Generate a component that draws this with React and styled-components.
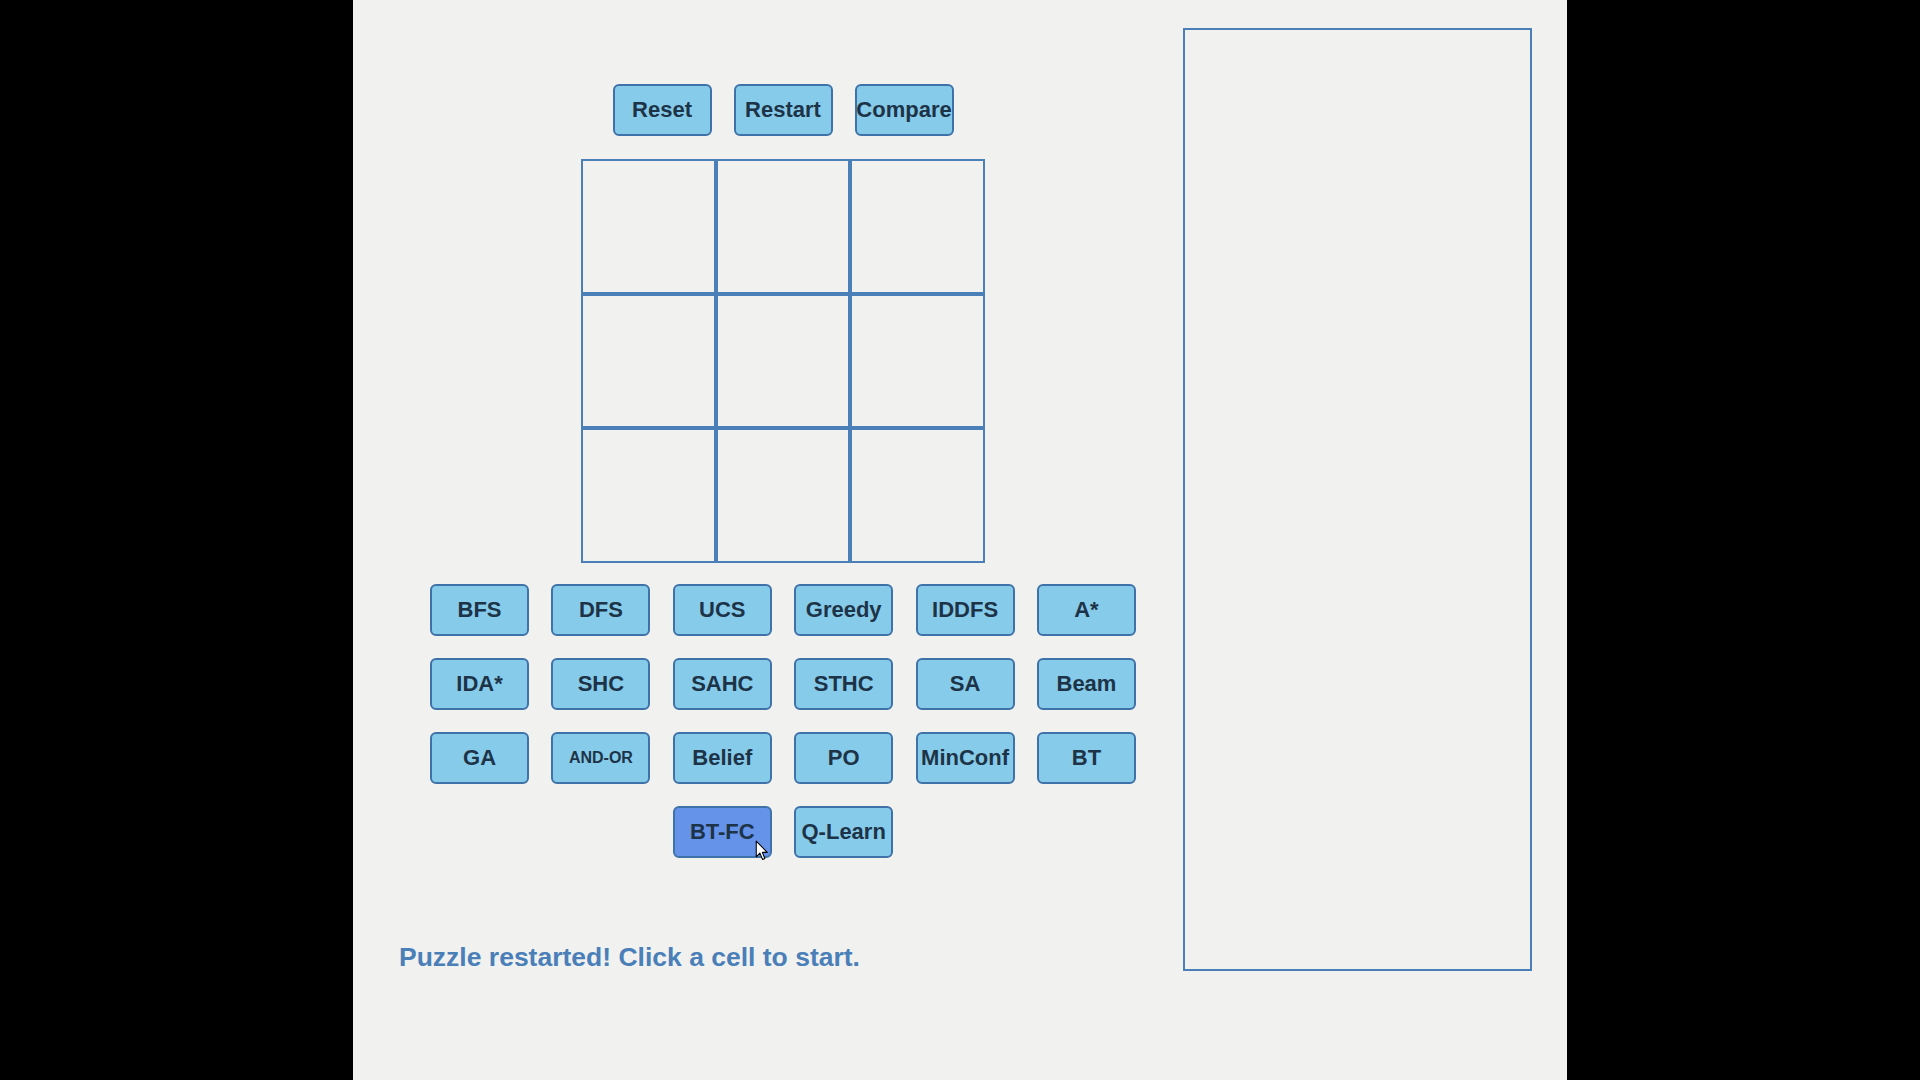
import React from "react";
import styled, { createGlobalStyle } from "styled-components";

const Global = createGlobalStyle`
  html, body {
    margin: 0;
    padding: 0;
    background: #000;
  }
  body {
    font-family: "Liberation Sans", Arial, sans-serif;
  }
`;

const topButtons = ["Reset", "Restart", "Compare"];

const algorithms = [
  "BFS", "DFS", "UCS", "Greedy", "IDDFS", "A*",
  "IDA*", "SHC", "SAHC", "STHC", "SA", "Beam",
  "GA", "AND-OR", "Belief", "PO", "MinConf", "BT",
  "BT-FC", "Q-Learn",
];

export default function App() {
  const active = "BT-FC";

  return (
    <>
      <Global />
      <Screen>
        <Panel>
          <Left>
            <ButtonRow>
              {topButtons.map((b) => (
                <Button key={b}>{b}</Button>
              ))}
            </ButtonRow>
            <Board>
              {Array.from({ length: 9 }).map((_, i) => (
                <Cell key={i} />
              ))}
            </Board>
            <AlgoGrid>
              {algorithms.map((a) => (
                <Button key={a} $active={a === active} $small={a === "AND-OR"}>
                  {a}
                  {a === active && (
                    <Cursor viewBox="0 0 12 20" width="13" height="21">
                      <path
                        d="M1 1 L1 16 L4.5 12.5 L7 18.5 L9.2 17.6 L6.8 11.8 L11.5 11.8 Z"
                        fill="#fff"
                        stroke="#000"
                        strokeWidth="1"
                        strokeLinejoin="round"
                      />
                    </Cursor>
                  )}
                </Button>
              ))}
            </AlgoGrid>
            <Status>Puzzle restarted! Click a cell to start.</Status>
          </Left>
          <SidePanel />
        </Panel>
      </Screen>
    </>
  );
}

const Screen = styled.div`
  width: 1920px;
  height: 1080px;
  background: #000;
  display: flex;
  padding-left: 353px;
  box-sizing: border-box;
`;

const Panel = styled.div`
  width: 1214px;
  height: 1080px;
  background: #f1f1f0;
  display: flex;
  align-items: flex-start;
  padding-left: 30px;
  box-sizing: border-box;
`;

const Left = styled.div`
  width: 800px;
  display: flex;
  flex-direction: column;
  align-items: center;
  padding-top: 84px;
`;

const ButtonRow = styled.div`
  display: flex;
  gap: 22px;
`;

const Button = styled.button`
  position: relative;
  width: 99px;
  height: 52px;
  padding: 0;
  box-sizing: border-box;
  border: 2px solid #3f72a8;
  border-radius: 6px;
  background: ${(p) => (p.$active ? "#6593ea" : "#86cbea")};
  color: #1d3347;
  font-family: "Liberation Sans", Arial, sans-serif;
  font-weight: 700;
  font-size: ${(p) => (p.$small ? "16px" : "22px")};
  white-space: nowrap;
  display: flex;
  align-items: center;
  justify-content: center;
  cursor: pointer;
`;

const Cursor = styled.svg`
  position: absolute;
  left: 80px;
  top: 32px;
`;

const Board = styled.div`
  margin-top: 23px;
  width: 404px;
  height: 404px;
  display: grid;
  grid-template-columns: repeat(3, 1fr);
  grid-template-rows: repeat(3, 1fr);
`;

const Cell = styled.div`
  border: 2px solid #4a7fb8;
`;

const AlgoGrid = styled.div`
  margin-top: 21px;
  width: 706px;
  display: flex;
  flex-wrap: wrap;
  justify-content: center;
  column-gap: 22.4px;
  row-gap: 22px;
`;

const Status = styled.div`
  align-self: flex-start;
  margin-top: 84px;
  margin-left: 16px;
  color: #4a7fb8;
  font-family: "Liberation Sans", Arial, sans-serif;
  font-weight: 700;
  font-size: 26.5px;
  line-height: 30px;
`;

const SidePanel = styled.div`
  margin-top: 28px;
  width: 349px;
  height: 943px;
  box-sizing: border-box;
  border: 2px solid #4a7fb8;
`;
